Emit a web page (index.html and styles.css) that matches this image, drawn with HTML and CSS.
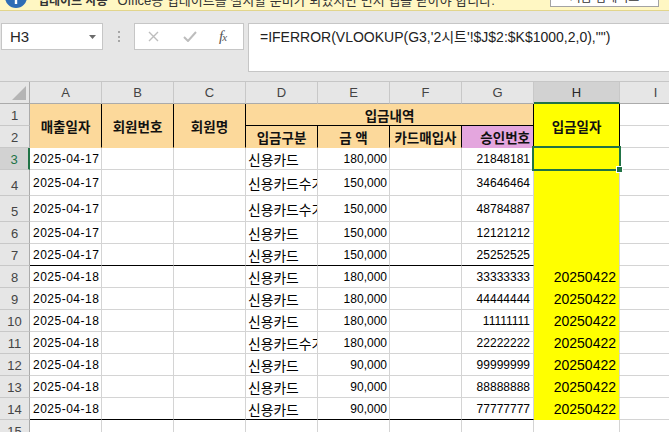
FILE: index.html
```html
<!DOCTYPE html>
<html lang="ko">
<head>
<meta charset="utf-8">
<title>Excel</title>
<link rel="stylesheet" href="styles.css">
</head>
<body>
<div class="notice">
  <svg class="info-ic" width="22" height="22" viewBox="0 0 22 22"><circle cx="11" cy="11" r="11" fill="#2f6db5"/><rect x="9.8" y="9" width="2.4" height="9" fill="#fff"/><circle cx="11" cy="5.5" r="1.5" fill="#fff"/></svg>
  <span class="notice-title">업데이트 사용</span>
  <span class="notice-text">Office용 업데이트를 설치할 준비가 되었지만 먼저 앱을 닫아야 합니다.</span>
  <span class="notice-btn">지금 업데이트</span>
</div>
<div class="toolbar">
  <div class="namebox"><span>H3</span><svg class="dd" width="7" height="4" viewBox="0 0 7 4"><polygon points="0,0 7,0 3.5,4" fill="#6b6b6b"/></svg></div>
  <div class="dots"><i></i><i></i><i></i></div>
  <div class="fnbox">
    <svg class="ic-x" width="11" height="11" viewBox="0 0 11 11"><path d="M1 1 L10 10 M10 1 L1 10" stroke="#bdbdbd" stroke-width="1.4" fill="none"/></svg>
    <svg class="ic-ok" width="14" height="11" viewBox="0 0 14 11"><path d="M1 6 L5 10 L13 1" stroke="#bdbdbd" stroke-width="2" fill="none"/></svg>
    <span class="fx">f<span class="fx-x">x</span></span>
  </div>
  <div class="formula">=IFERROR(VLOOKUP(G3,'2시트'!$J$2:$K$1000,2,0),"")</div>
</div>
<div class="sheet">
  <div class="cell ch corner"><svg width="14" height="14" viewBox="0 0 14 14"><polygon points="14,0 14,14 0,14" fill="#b5b5b5"/></svg></div>
  <div class="cell ch">A</div><div class="cell ch">B</div><div class="cell ch">C</div><div class="cell ch">D</div><div class="cell ch">E</div><div class="cell ch">F</div><div class="cell ch">G</div><div class="cell ch ch-sel">H</div><div class="cell ch">I</div>

  <div class="cell rh">1</div>
  <div class="cell hd r2 bk-r">매출일자</div>
  <div class="cell hd r2 bk-r">회원번호</div>
  <div class="cell hd r2 bk-r">회원명</div>
  <div class="cell hd c4 bk-r bk-b">입금내역</div>
  <div class="cell hd yel r2 bk-r">입금일자</div>
  <div class="cell"></div>

  <div class="cell rh">2</div>
  <div class="cell hd bk-r">입금구분</div>
  <div class="cell hd bk-r">금 액</div>
  <div class="cell hd bk-r">카드매입사</div>
  <div class="cell hd pink bk-r">승인번호</div>
  <div class="cell"></div>

  <div class="cell rh rh-sel">3</div><div class="cell date">2025-04-17</div><div class="cell"></div><div class="cell"></div><div class="cell kr">신용카드</div><div class="cell num">180,000</div><div class="cell"></div><div class="cell num appr">21848181</div><div class="cell yel"></div><div class="cell"></div>
  <div class="cell rh">4</div><div class="cell date">2025-04-17</div><div class="cell"></div><div class="cell"></div><div class="cell kr">신용카드수기</div><div class="cell num">150,000</div><div class="cell"></div><div class="cell num appr">34646464</div><div class="cell yel"></div><div class="cell"></div>
  <div class="cell rh">5</div><div class="cell date">2025-04-17</div><div class="cell"></div><div class="cell"></div><div class="cell kr">신용카드수기</div><div class="cell num">150,000</div><div class="cell"></div><div class="cell num appr">48784887</div><div class="cell yel"></div><div class="cell"></div>
  <div class="cell rh">6</div><div class="cell date">2025-04-17</div><div class="cell"></div><div class="cell"></div><div class="cell kr">신용카드</div><div class="cell num">150,000</div><div class="cell"></div><div class="cell num appr">12121212</div><div class="cell yel"></div><div class="cell"></div>
  <div class="cell rh">7</div><div class="cell date bl">2025-04-17</div><div class="cell bl"></div><div class="cell bl"></div><div class="cell kr bl">신용카드</div><div class="cell num bl">150,000</div><div class="cell bl"></div><div class="cell num appr bl">25252525</div><div class="cell yel"></div><div class="cell"></div>
  <div class="cell rh">8</div><div class="cell date">2025-04-18</div><div class="cell"></div><div class="cell"></div><div class="cell kr">신용카드</div><div class="cell num">180,000</div><div class="cell"></div><div class="cell num appr">33333333</div><div class="cell yel hnum">20250422</div><div class="cell"></div>
  <div class="cell rh">9</div><div class="cell date">2025-04-18</div><div class="cell"></div><div class="cell"></div><div class="cell kr">신용카드</div><div class="cell num">180,000</div><div class="cell"></div><div class="cell num appr">44444444</div><div class="cell yel hnum">20250422</div><div class="cell"></div>
  <div class="cell rh">10</div><div class="cell date">2025-04-18</div><div class="cell"></div><div class="cell"></div><div class="cell kr">신용카드</div><div class="cell num">180,000</div><div class="cell"></div><div class="cell num appr">11111111</div><div class="cell yel hnum">20250422</div><div class="cell"></div>
  <div class="cell rh">11</div><div class="cell date">2025-04-18</div><div class="cell"></div><div class="cell"></div><div class="cell kr">신용카드수기</div><div class="cell num">180,000</div><div class="cell"></div><div class="cell num appr">22222222</div><div class="cell yel hnum">20250422</div><div class="cell"></div>
  <div class="cell rh">12</div><div class="cell date">2025-04-18</div><div class="cell"></div><div class="cell"></div><div class="cell kr">신용카드</div><div class="cell num">90,000</div><div class="cell"></div><div class="cell num appr">99999999</div><div class="cell yel hnum">20250422</div><div class="cell"></div>
  <div class="cell rh">13</div><div class="cell date">2025-04-18</div><div class="cell"></div><div class="cell"></div><div class="cell kr">신용카드</div><div class="cell num">90,000</div><div class="cell"></div><div class="cell num appr">88888888</div><div class="cell yel hnum">20250422</div><div class="cell"></div>
  <div class="cell rh">14</div><div class="cell date bl">2025-04-18</div><div class="cell bl"></div><div class="cell bl"></div><div class="cell kr bl">신용카드</div><div class="cell num bl">90,000</div><div class="cell bl"></div><div class="cell num appr bl">77777777</div><div class="cell yel hnum">20250422</div><div class="cell"></div>
  <div class="cell rh">15</div><div class="cell"></div><div class="cell"></div><div class="cell"></div><div class="cell"></div><div class="cell"></div><div class="cell"></div><div class="cell"></div><div class="cell"></div><div class="cell"></div>

  <div class="sel"></div>
  <div class="handle"></div>
</div>
</body>
</html>
```

FILE: styles.css
```css
html, body {
  margin: 0;
  padding: 0;
}
body {
  width: 669px;
  height: 432px;
  overflow: hidden;
  background: #e6e6e6;
  font-family: "Liberation Sans", "Noto Sans CJK KR", sans-serif;
  color: #000;
}

/* notification bar */
.notice {
  height: 10px;
  background: #fff7c3;
  border-bottom: 1px solid #e2d58c;
  display: flex;
  align-items: flex-end;
  overflow: hidden;
  padding-left: 5px;
}
.info-ic {
  flex: none;
  margin-bottom: 2px;
}
.notice-title {
  margin-left: 11px;
  margin-bottom: 2px;
  font-size: 12px;
  line-height: 14px;
  font-weight: bold;
  color: #333;
  white-space: nowrap;
}
.notice-text {
  margin-left: 10px;
  margin-bottom: 2px;
  font-size: 13px;
  line-height: 14px;
  color: #333;
  white-space: nowrap;
}
.notice-btn {
  flex: none;
  margin-left: auto;
  margin-right: 10px;
  margin-bottom: 3px;
  width: 109px;
  height: 22px;
  box-sizing: border-box;
  background: #fff;
  border: 1px solid #a3a3a3;
  font-size: 12px;
  display: flex;
  align-items: center;
  justify-content: center;
  color: #333;
}

/* formula toolbar */
.toolbar {
  display: flex;
  align-items: flex-start;
  margin-top: 12px;
  height: 49px;
}
.namebox {
  flex: none;
  margin-left: 1px;
  width: 102px;
  height: 27px;
  box-sizing: border-box;
  background: #fff;
  border: 1px solid #c6c6c6;
  display: flex;
  align-items: center;
  padding-left: 8px;
  padding-right: 6px;
  font-size: 15px;
  color: #262626;
}
.namebox .dd {
  margin-left: auto;
}
.dots {
  flex: none;
  width: 31px;
  height: 27px;
  display: flex;
  flex-direction: column;
  align-items: center;
  justify-content: center;
  gap: 2.5px;
}
.dots i {
  display: block;
  width: 2px;
  height: 2px;
  background: #a6a6a6;
}
.fnbox {
  flex: none;
  width: 110px;
  height: 27px;
  box-sizing: border-box;
  background: #fff;
  border: 1px solid #c6c6c6;
  display: flex;
  align-items: center;
  padding-left: 13px;
}
.ic-x {
  flex: none;
}
.ic-ok {
  flex: none;
  margin-left: 24px;
}
.fx {
  margin-left: 22px;
  font-family: "Liberation Serif", serif;
  font-style: italic;
  font-size: 15px;
  color: #555;
  letter-spacing: -1px;
}
.fx-x {
  font-size: 11px;
}
.formula {
  flex: 1;
  margin-left: 4px;
  height: 49px;
  box-sizing: border-box;
  background: #fff;
  border: 1px solid #c6c6c6;
  border-right: none;
  padding: 3px 0 0 11px;
  font-size: 14px;
  line-height: 20px;
  color: #222;
  white-space: nowrap;
}

/* sheet grid */
.sheet {
  position: relative;
  margin-top: 9px;
  border-top: 1px solid #c6c6c6;
  display: grid;
  grid-template-columns: 30px repeat(7, 72px) 86px 72px;
  grid-template-rows: 22px 22px 22px 22px 26px 26px repeat(10, 22px);
  background: #fff;
  width: 692px;
}
.cell {
  box-sizing: border-box;
  border-right: 1px solid #d4d4d4;
  border-bottom: 1px solid #d4d4d4;
  overflow: hidden;
  white-space: nowrap;
  display: flex;
  align-items: center;
  font-size: 12px;
  padding: 0 2px;
  min-width: 0;
}
.ch {
  background: #e6e6e6;
  border-right-color: #c8c8c8;
  border-bottom-color: #ababab;
  justify-content: center;
  font-size: 13px;
  color: #444;
}
.ch-sel {
  background: #d2d2d2;
  border-bottom: 2px solid #217346;
  color: #262626;
}
.corner {
  justify-content: flex-end;
  align-items: flex-end;
  padding: 0 3px 3px 0;
  border-right-color: #ababab;
}
.rh {
  background: #e6e6e6;
  border-right-color: #ababab;
  border-bottom-color: #c8c8c8;
  justify-content: center;
  align-items: flex-end;
  padding-bottom: 2px;
  font-size: 13px;
  color: #444;
}
.rh-sel {
  background: #d2d2d2;
  border-right: 2px solid #217346;
  color: #217346;
}

.hd {
  background: #fcd99b;
  border-right-color: #fcd99b;
  border-bottom-color: #fcd99b;
  font-weight: bold;
  font-size: 13.5px;
  justify-content: center;
  color: #111;
}
.r2 {
  grid-row: span 2;
}
.c4 {
  grid-column: span 4;
}
.bk-r {
  border-right-color: #000;
}
.bk-b {
  border-bottom-color: #000;
}
.pink {
  background: #e4a6de;
  border-bottom-color: #e4a6de;
  justify-content: flex-end;
  padding-right: 3px;
}
.yel {
  background: #ffff00;
  border-bottom-color: #ffff00;
}
.hd.yel {
  border-bottom-color: #ffff00;
}
.date {
  padding-left: 3px;
  letter-spacing: 0.5px;
}
.kr {
  font-size: 13.8px;
  padding-left: 2px;
}
.num {
  justify-content: flex-end;
  padding-right: 2px;
}
.appr {
  padding-right: 3px;
}
.hnum {
  justify-content: flex-end;
  padding-right: 3px;
  font-size: 14px;
}
.bl {
  border-bottom-color: #000;
}

/* selection overlay */
.sel {
  position: absolute;
  left: 532px;
  top: 64px;
  width: 89px;
  height: 25px;
  box-sizing: border-box;
  border: 2px solid #217346;
  pointer-events: none;
}
.handle {
  position: absolute;
  left: 616px;
  top: 84px;
  width: 7px;
  height: 7px;
  box-sizing: border-box;
  background: #217346;
  border: 1px solid #fff;
}
```
